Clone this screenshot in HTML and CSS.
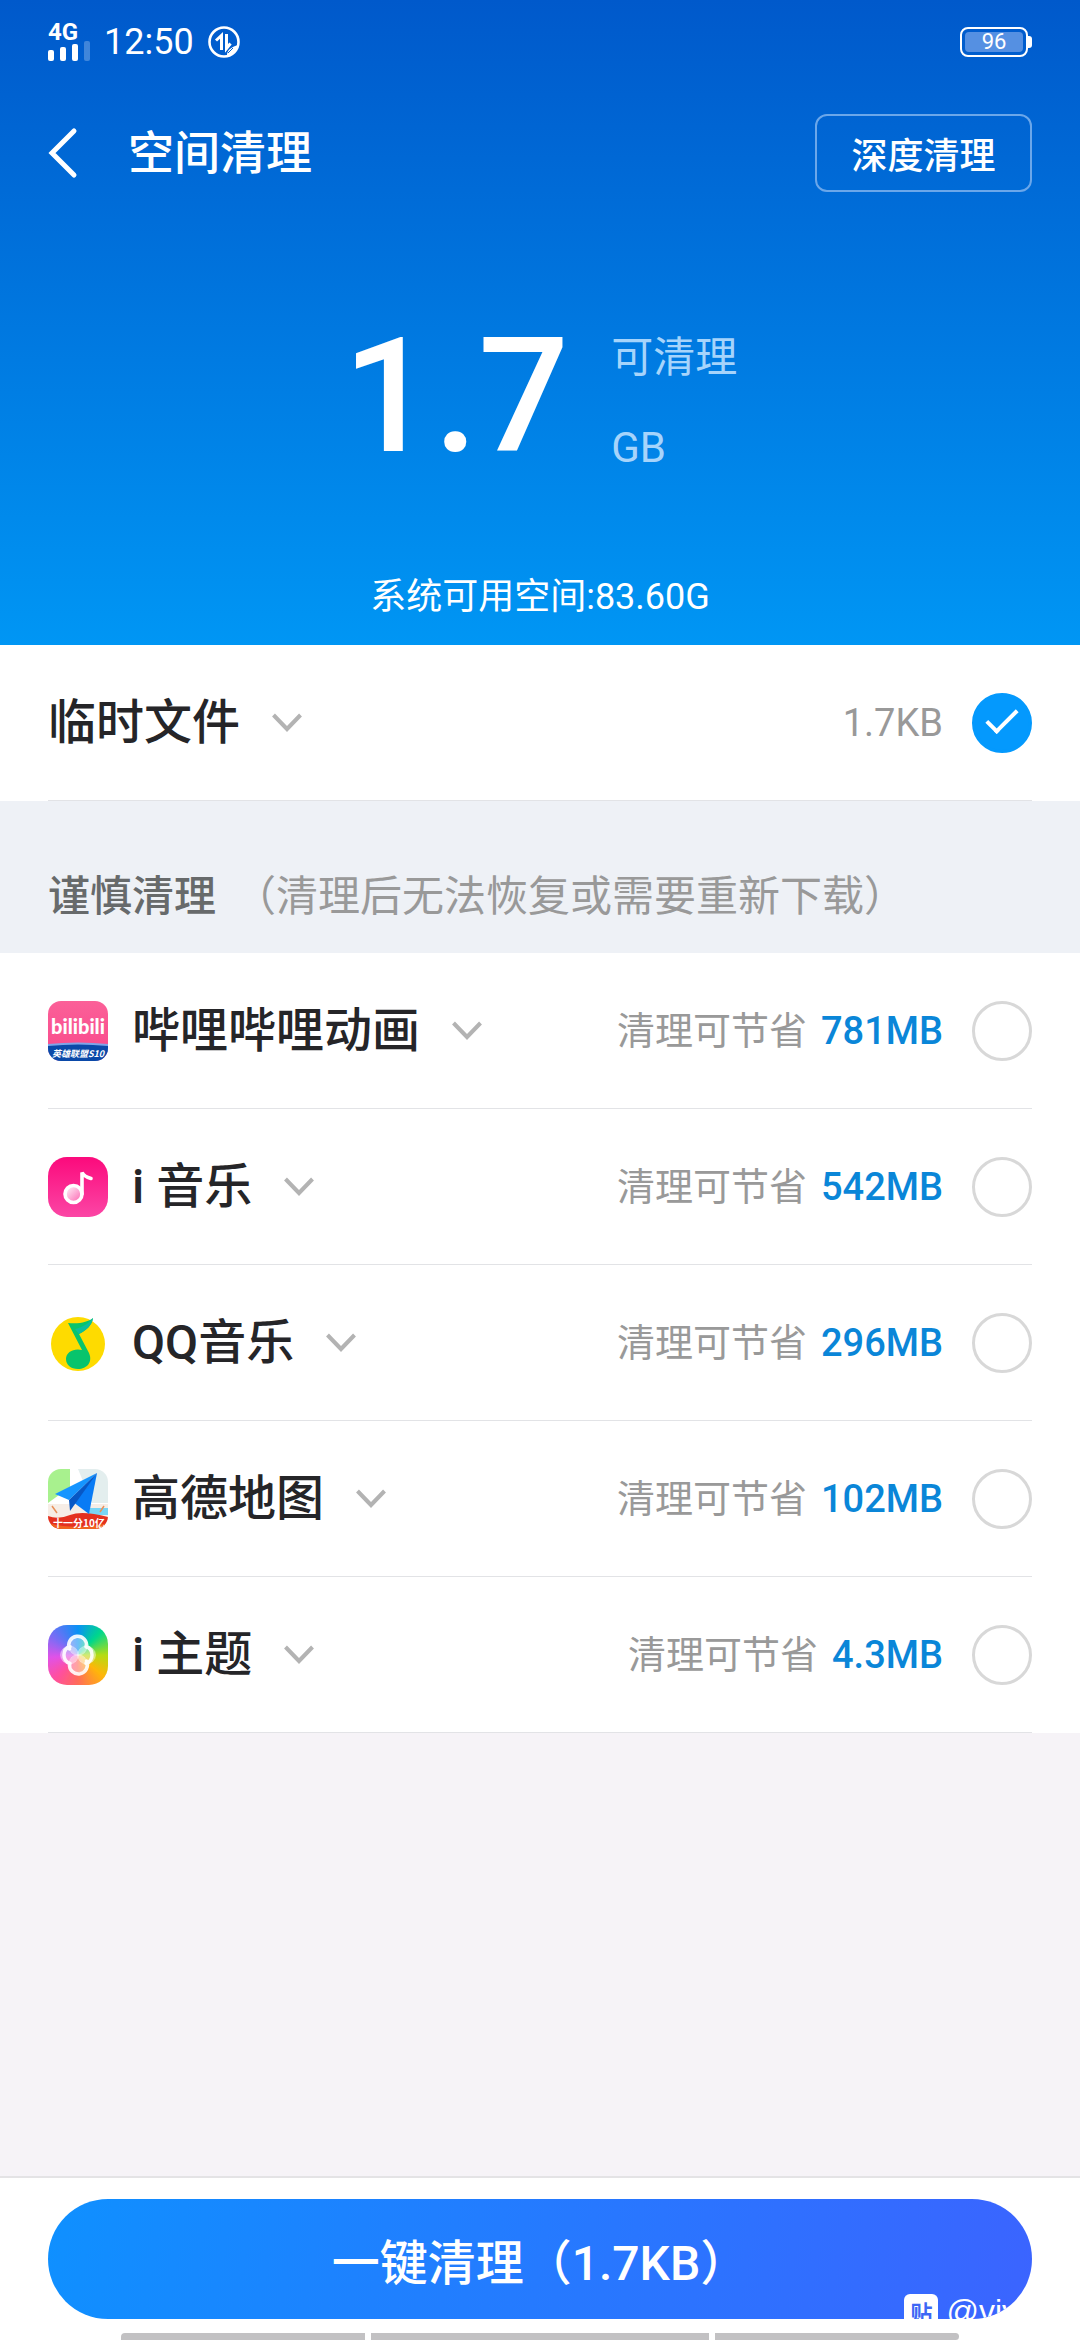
FILE: index.html
```html
<!DOCTYPE html>
<html lang="zh-CN">
<head>
    <meta charset="UTF-8">
    <meta name="viewport" content="width=device-width, initial-scale=1.0">
    <title>空间清理</title>
    <link rel="stylesheet" href="styles.css">
</head>
<body>
    <header class="hero">
        <!-- Status bar -->
        <div class="status-bar">
            <div class="status-left">
                <div class="signal">
                    <span class="network">4G</span>
                    <svg width="42" height="20" viewBox="0 0 42 20" fill="#fff">
                        <rect x="0" y="9" width="6" height="11" rx="2"/>
                        <rect x="12" y="6" width="6" height="14" rx="2"/>
                        <rect x="24" y="3" width="6" height="17" rx="2"/>
                        <rect x="36" y="0" width="6" height="20" rx="2" opacity=".25"/>
                    </svg>
                </div>
                <span class="time">12:50</span>
                <svg width="32" height="32" viewBox="0 0 32 32" fill="none" stroke="#fff">
                    <circle cx="16" cy="16" r="14.5" stroke-width="2.6"/>
                    <path d="M13.5 24V9.5L8 14.500M18.500 8v14.500l4-5" stroke-width="3"/>
                    <path d="M19 28c1-5 5-7 11-9-1 6-5 9-11 11z" fill="#fff" stroke="none"/>
                    <path d="M20 27l5-5" stroke="#0061d0"/>
                </svg>
            </div>
            <div class="battery"><span>96</span></div>
        </div>

        <!-- Title -->
        <div class="title-bar">
            <button class="back" aria-label="返回">
                <svg width="30" height="52" viewBox="0 0 30 52" fill="none" stroke="#fff" stroke-width="5" stroke-linecap="round">
                    <path d="M26 4L4 26l22 22"/>
                </svg>
            </button>
            <h1>空间清理</h1>
            <button class="deep-clean">深度清理</button>
        </div>

        <div class="total">
            <span class="total-number">1.7</span>
            <div class="total-side">
                <span>可清理</span>
                <span>GB</span>
            </div>
        </div>
        <p class="free-space">系统可用空间:83.60G</p>
    </header>

    <main>
        <div class="row">
            <button class="expand">临时文件
                <svg class="chevron" viewBox="0 0 30 20"><path d="M1.500 2L15 16 28.500 2"/></svg>
            </button>
            <label class="pick">
                <span>1.7KB</span>
                <input type="checkbox" checked>
            </label>
        </div>

        <h2 class="section-title">谨慎清理<span>（清理后无法恢复或需要重新下载）</span></h2>

        <!-- bilibili -->
        <div class="row">
            <svg class="app-icon" viewBox="0 0 60 60">
                <defs>
                    <clipPath id="round"><rect width="60" height="60" rx="13"/></clipPath>
                    <linearGradient id="biliPink" x2="0" y2="1">
                        <stop stop-color="#fb6098"/>
                        <stop offset="1" stop-color="#f9488b"/>
                    </linearGradient>
                </defs>
                <g clip-path="url(#round)">
                    <rect width="60" height="60" fill="url(#biliPink)"/>
                    <path d="M0 43q30-3 60 0v17H0z" fill="#7fa5e8"/>
                    <path d="M0 45q30-3 60 0v15H0z" fill="#0a49a8"/>
                    <text class="bili-word" x="30" y="33">bilibili</text>
                    <text class="bili-note" x="30" y="56">英雄联盟S10</text>
                </g>
            </svg>
            <button class="expand">哔哩哔哩动画
                <svg class="chevron" viewBox="0 0 30 20"><path d="M1.500 2L15 16 28.500 2"/></svg>
            </button>
            <label class="pick">
                <span>清理可节省</span>
                <span class="amount">781MB</span>
                <input type="checkbox">
            </label>
        </div>

        <!-- i Music -->
        <div class="row">
            <svg class="app-icon" viewBox="0 0 60 60">
                <defs>
                    <linearGradient id="musicPink" x2="0" y2="1">
                        <stop stop-color="#fb0a7c"/>
                        <stop offset="1" stop-color="#fb46a5"/>
                    </linearGradient>
                    <linearGradient id="noteHead" x2="1" y2="1">
                        <stop stop-color="#fff"/>
                        <stop offset="1" stop-color="#fc5eae"/>
                    </linearGradient>
                </defs>
                <rect width="60" height="60" rx="19" fill="url(#musicPink)"/>
                <circle cx="25.500" cy="37" r="8.500" fill="url(#noteHead)" stroke="#fff" stroke-width="3.600"/>
                <path d="M34 37V15.500q2 4 9 6" fill="none" stroke="#fff" stroke-width="3.600" stroke-linecap="round"/>
            </svg>
            <button class="expand">i 音乐
                <svg class="chevron" viewBox="0 0 30 20"><path d="M1.500 2L15 16 28.500 2"/></svg>
            </button>
            <label class="pick">
                <span>清理可节省</span>
                <span class="amount">542MB</span>
                <input type="checkbox">
            </label>
        </div>

        <!-- QQ Music -->
        <div class="row">
            <svg class="app-icon" viewBox="0 0 60 60">
                <circle cx="30" cy="31" r="27" fill="#fedb00"/>
                <path d="M45 5c-1 7-6 12-14 16l10 19c4 9-2 16-11 16-7 0-12-4-12-10 0-7 8-11 16-9L20 10c12 1 20-1 25-5z" fill="#08c46c"/>
                <path d="M45 5c-1 7-6 12-14 16l-4-5c8-2 14-6 18-11z" fill="#0dbd9b"/>
            </svg>
            <button class="expand">QQ音乐
                <svg class="chevron" viewBox="0 0 30 20"><path d="M1.500 2L15 16 28.500 2"/></svg>
            </button>
            <label class="pick">
                <span>清理可节省</span>
                <span class="amount">296MB</span>
                <input type="checkbox">
            </label>
        </div>

        <!-- Amap -->
        <div class="row">
            <svg class="app-icon" viewBox="0 0 60 60">
                <g clip-path="url(#round)">
                    <rect width="60" height="60" fill="#fff"/>
                    <path d="M0 0h22v18L0 34z" fill="#a8f18e"/>
                    <path d="M30 0h30v34H44z" fill="#e3eeee"/>
                    <path d="M0 35h60v14H0z" fill="#f6ede6"/>
                    <path d="M42 39h18v7H40z" fill="#79d5f5"/>
                    <path d="M4 37l5 7M56 37l-4 6" stroke="#e8905a" stroke-width="1.500"/>
                    <path d="M0 47q10 4 22-1t38 2v12H0z" fill="#e4301f"/>
                    <path d="M0 54q28 8 60 0v6H0z" fill="#f0621f"/>
                    <path d="M49 4L7 25l14 6z" fill="#1595ff"/>
                    <path d="M49 4L25 33l16 12z" fill="#087bf5"/>
                    <path d="M49 4L21 31l1 11 5-7z" fill="#0757c5"/>
                    <text class="amap-note" x="31" y="58">十一分10亿</text>
                </g>
            </svg>
            <button class="expand">高德地图
                <svg class="chevron" viewBox="0 0 30 20"><path d="M1.500 2L15 16 28.500 2"/></svg>
            </button>
            <label class="pick">
                <span>清理可节省</span>
                <span class="amount">102MB</span>
                <input type="checkbox">
            </label>
        </div>

        <!-- i Theme -->
        <div class="row">
            <svg class="app-icon theme-icon" viewBox="0 0 60 60">
                <g fill="#fff" fill-opacity=".4" stroke="#fff" stroke-opacity=".3">
                    <circle cx="30" cy="21.500" r="9"/>
                    <circle cx="38.500" cy="30" r="9"/>
                    <circle cx="30" cy="38.500" r="9"/>
                    <circle cx="21.500" cy="30" r="9"/>
                </g>
                <g fill="none" stroke="#fff" stroke-width="3.500" stroke-linecap="round" opacity=".9">
                    <path d="M21.500 24a9 9 0 1 1 17-2"/>
                    <path d="M38 21.500a9 9 0 0 1 0 17"/>
                    <path d="M38.500 36a9 9 0 1 1-17 3"/>
                    <path d="M22 38.500a9 9 0 0 1 0-17"/>
                </g>
            </svg>
            <button class="expand">i 主题
                <svg class="chevron" viewBox="0 0 30 20"><path d="M1.500 2L15 16 28.500 2"/></svg>
            </button>
            <label class="pick">
                <span>清理可节省</span>
                <span class="amount">4.3MB</span>
                <input type="checkbox">
            </label>
        </div>
    </main>

    <footer class="footer">
        <button class="clean-all">一键清理（1.7KB）
            <span class="watermark"><span class="watermark-logo">贴</span>@viv</span>
        </button>
        <div class="nav-handles">
            <span></span>
            <span></span>
            <span></span>
        </div>
    </footer>
</body>
</html>
```

FILE: styles.css
```css
* {
    box-sizing: border-box;
}
body {
    margin: 0;
    min-height: 100vh;
    display: flex;
    flex-direction: column;
    background-color: #f6f3f7;
    font-family: "Roboto", "Noto Sans CJK SC", sans-serif;
    color: #252528;
}
button {
    padding: 0;
    border: none;
    background: none;
    font: inherit;
    color: inherit;
}
svg {
    display: block;
    flex: none;
}
h1, h2, p {
    margin: 0;
    font-weight: 500;
}

/* Blue header */
.hero {
    padding: 0 48px 24px;
    background: linear-gradient(#0059cb, #0096f4);
    color: #fff;
}
.status-bar {
    display: flex;
    justify-content: space-between;
    align-items: center;
    height: 84px;
}
.status-left {
    display: flex;
    align-items: center;
    gap: 14px;
}
.network {
    display: block;
    font-size: 24px;
    font-weight: 700;
    line-height: 18px;
}
.time {
    font-size: 36px;
    line-height: 48px;
}
.battery {
    position: relative;
    width: 68px;
    height: 30px;
    margin-right: 4px;
    padding: 3px;
    border: 2px solid #fff;
    border-radius: 8px;
}
.battery span {
    display: block;
    border-radius: 4px;
    background-color: #5590e2;
    font-size: 22px;
    line-height: 20px;
    text-align: center;
}
.battery::after {
    content: "";
    position: absolute;
    top: 7px;
    right: -6px;
    width: 4px;
    height: 12px;
    border-radius: 0 3px 3px 0;
    background-color: #fff;
}
.title-bar {
    display: flex;
    align-items: center;
    padding-top: 30px;
}
.title-bar h1 {
    flex: 1;
    margin-left: 50px;
    font-size: 46px;
    line-height: 60px;
}
.deep-clean {
    min-width: 217px;
    height: 78px;
    padding: 0 34px;
    border: 2px solid #6ba7ea;
    border-radius: 12px;
    font-size: 36px;
    font-weight: 500;
}
.total {
    display: flex;
    justify-content: center;
    align-items: flex-end;
    gap: 42px;
    margin-top: 130px;
}
.total-number {
    font-size: 160px;
    font-weight: 500;
    line-height: 150px;
}
.total-side {
    display: flex;
    flex-direction: column;
    gap: 42px;
    font-size: 42px;
    line-height: 48px;
    color: #a6d4fb;
}
.free-space {
    margin-top: 101px;
    font-size: 36px;
    font-weight: 400;
    line-height: 48px;
    text-align: center;
}

/* List */
.row {
    display: flex;
    align-items: center;
    height: 156px;
    padding: 0 48px;
    background: linear-gradient(#e2e3e6, #e2e3e6) center bottom / calc(100% - 96px) 1px no-repeat #fff;
}
.app-icon {
    width: 60px;
    height: 60px;
    margin-right: 24px;
}
.expand {
    display: flex;
    align-items: center;
    gap: 32px;
    font-size: 48px;
    font-weight: 500;
    line-height: 60px;
}
.chevron {
    width: 30px;
    height: 20px;
    fill: none;
    stroke: #b3b3b3;
    stroke-width: 4;
}
.pick {
    display: flex;
    align-items: center;
    gap: 14px;
    margin-left: auto;
    font-size: 38px;
    line-height: 48px;
    color: #999;
}
.amount {
    font-weight: 500;
    color: #0a86d8;
}
.pick input {
    appearance: none;
    display: grid;
    align-content: start;
    justify-content: center;
    width: 60px;
    height: 60px;
    margin: 0 0 0 15px;
    border: 3px solid #d8d8d8;
    border-radius: 50%;
}
.pick input:checked {
    border-color: #0499fd;
    background-color: #0499fd;
}
.pick input:checked::after {
    content: "";
    width: 12px;
    height: 27px;
    margin-top: 6px;
    border: solid #fff;
    border-width: 0 4px 4px 0;
    transform: rotate(45deg);
}
.section-title {
    display: flex;
    gap: 18px;
    padding: 66px 48px 26px;
    background-color: #eef1f6;
    font-size: 42px;
    line-height: 60px;
    color: #676a6b;
}
.section-title span {
    font-weight: 400;
    color: #999;
}

/* App icons */
.app-icon text {
    fill: #fff;
    text-anchor: middle;
}
.bili-word {
    font: 900 20px "Lato", sans-serif;
}
.bili-note {
    font: italic bold 9px "Noto Sans CJK SC", sans-serif;
}
.amap-note {
    font: bold 10px "Noto Sans CJK SC", sans-serif;
}
.theme-icon {
    border-radius: 19px;
    background: conic-gradient(#0a91f5, #00d78c 45deg, #b4dc14 90deg, #ffb60a 130deg, #ff6c59 180deg, #ff4fa0 225deg, #e052e8 265deg, #7c6cf5 305deg, #0a91f5);
}

/* Bottom bar */
.footer {
    margin-top: auto;
    padding: 21px 48px 0;
    border-top: 2px solid #e4e3e5;
    background-color: #fff;
}
.clean-all {
    position: relative;
    display: block;
    width: 100%;
    height: 120px;
    border-radius: 60px;
    overflow: hidden;
    background: linear-gradient(100deg, #0f90ff, #3b64ff);
    font-size: 48px;
    font-weight: 500;
    color: #fff;
}
.watermark {
    position: absolute;
    top: 95px;
    right: 14px;
    display: flex;
    gap: 8px;
    font: 32px/34px "Liberation Sans", sans-serif;
}
.watermark-logo {
    width: 34px;
    height: 34px;
    border-radius: 6px;
    background-color: #fff;
    font: bold 22px/34px "Noto Sans CJK SC", sans-serif;
    color: #3d67f5;
}
.nav-handles {
    display: grid;
    grid-template-columns: 244fr 338fr 244fr;
    gap: 6px;
    margin-top: 14px;
    padding: 0 73px;
}
.nav-handles span {
    height: 7px;
    background-color: #c2c1c3;
}
.nav-handles span:first-child {
    border-radius: 4px 0 0 0;
}
.nav-handles span:last-child {
    border-radius: 0 4px 4px 0;
}
```
